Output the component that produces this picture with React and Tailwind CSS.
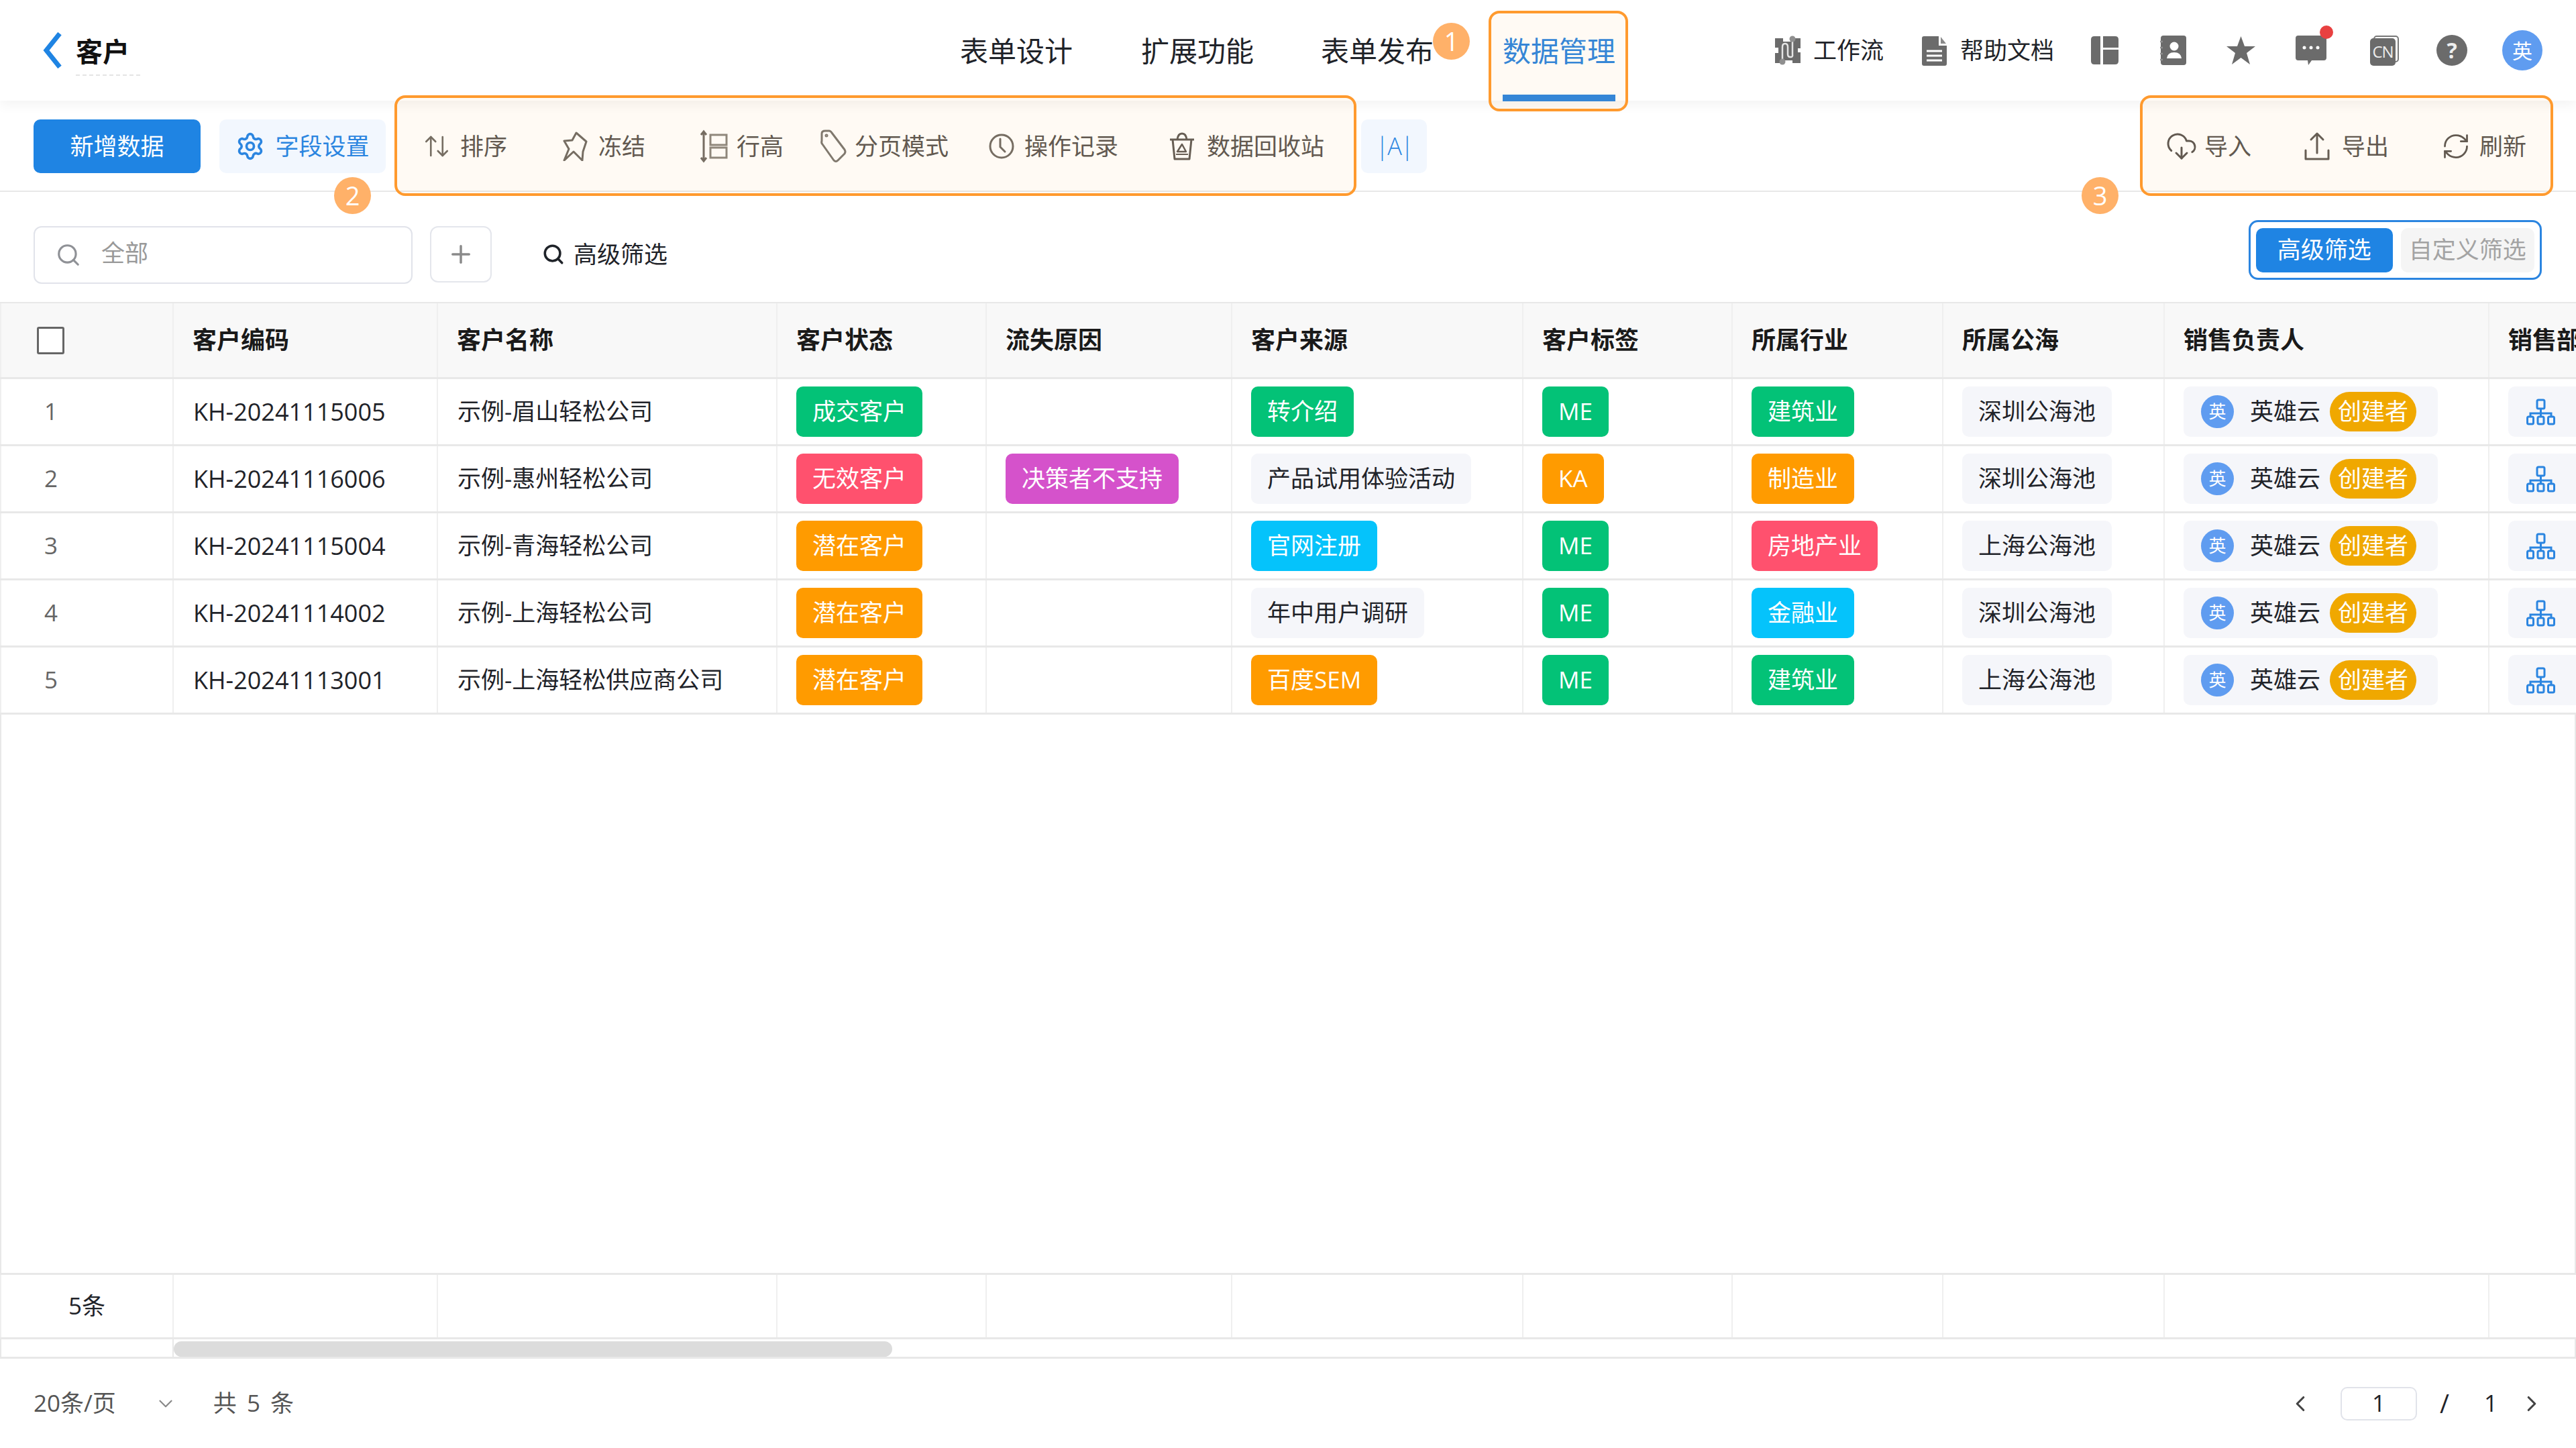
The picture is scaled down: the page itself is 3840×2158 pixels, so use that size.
import { ArrowUpDown, Settings, Search, Plus, ChevronDown, ChevronLeft, ChevronRight, CloudDownload, RefreshCw } from 'lucide-react';

const columns = ['客户编码', '客户名称', '客户状态', '流失原因', '客户来源', '客户标签', '所属行业', '所属公海', '销售负责人', '销售部'];

const GREEN = 'bg-[#03c277] text-white';
const RED = 'bg-[#ff516e] text-white';
const ORANGE = 'bg-[#ff9b00] text-white';
const CYAN = 'bg-[#05c3fb] text-white';
const PURPLE = 'bg-[#d552cb] text-white';
const GRAY = 'bg-[#f5f6fa] text-[#1f2329]';

const rows = [
  { id: 1, code: 'KH-20241115005', name: '示例-眉山轻松公司', status: ['成交客户', GREEN], source: ['转介绍', GREEN], tag: ['ME', GREEN], industry: ['建筑业', GREEN], pool: '深圳公海池' },
  { id: 2, code: 'KH-20241116006', name: '示例-惠州轻松公司', status: ['无效客户', RED], reason: ['决策者不支持', PURPLE], source: ['产品试用体验活动', GRAY], tag: ['KA', ORANGE], industry: ['制造业', ORANGE], pool: '深圳公海池' },
  { id: 3, code: 'KH-20241115004', name: '示例-青海轻松公司', status: ['潜在客户', ORANGE], source: ['官网注册', CYAN], tag: ['ME', GREEN], industry: ['房地产业', RED], pool: '上海公海池' },
  { id: 4, code: 'KH-20241114002', name: '示例-上海轻松公司', status: ['潜在客户', ORANGE], source: ['年中用户调研', GRAY], tag: ['ME', GREEN], industry: ['金融业', CYAN], pool: '深圳公海池' },
  { id: 5, code: 'KH-20241113001', name: '示例-上海轻松供应商公司', status: ['潜在客户', ORANGE], source: ['百度SEM', ORANGE], tag: ['ME', GREEN], industry: ['建筑业', GREEN], pool: '上海公海池' },
];

const GRID = 'grid grid-cols-[259px_394px_506px_312px_366px_434px_312px_314px_330px_484px_129px]';
const CELL = 'flex items-center border-r-2 border-[#efefef] pl-[28px] first:border-l-2 last:border-r-0';

function Chip({ item }) {
  if (!item) return null;
  return <span className={`flex h-[75px] items-center rounded-[10px] px-[24px] text-[35px] whitespace-nowrap ${item[1]}`}>{item[0]}</span>;
}

function Badge({ n, className }) {
  return <div className={`absolute flex h-[55px] w-[55px] items-center justify-center rounded-full bg-[#ffb169] text-[38px] text-white ${className}`}>{n}</div>;
}

function Outline({ className }) {
  return <div className={`absolute rounded-[16px] border-[4px] border-[#ff9a2e] bg-[#ff9a2e]/[0.05] ${className}`} />;
}

function PinIcon() {
  return (
    <svg viewBox="0 0 38 44" className="h-[44px] w-[38px]" fill="none" stroke="#6f6b66" strokeWidth="3" strokeLinejoin="round" strokeLinecap="round">
      <path d="M20 2 35 15 30 30 29 43 16 30 2 43 9 26 2 14 14 13Z" />
    </svg>
  );
}

function RowHeightIcon() {
  return (
    <svg viewBox="0 0 41 50" className="h-[50px] w-[41px]" fill="none" stroke="#8a8680" strokeWidth="3">
      <path d="M5 3v44M1 8l4-5 4 5M1 42l4 5 4-5" stroke="#6f6b66" />
      <rect x="15" y="8" width="24" height="15" />
      <rect x="15" y="27" width="24" height="15" />
    </svg>
  );
}

function TagIcon() {
  return (
    <svg viewBox="0 0 42 50" className="h-[50px] w-[42px]" fill="none" stroke="#7a7671" strokeWidth="3" strokeLinejoin="round">
      <path d="M4 6q0-4 5-4h6q2 0 4 3l19 25q2 3 0 6l-10 10q-3 3-6 0L5 22q-2-2-1-5Z" />
      <circle cx="11" cy="9" r="1" />
    </svg>
  );
}

function ClockIcon() {
  return (
    <svg viewBox="0 0 38 38" className="h-[38px] w-[38px]" fill="none" stroke="#6f6b66" strokeWidth="3" strokeLinecap="round">
      <circle cx="19" cy="19" r="17" />
      <path d="M17 8v12l7 7" />
    </svg>
  );
}

function TrashIcon() {
  return (
    <svg viewBox="0 0 38 42" className="h-[42px] w-[38px]" fill="none" stroke="#5f5b57" strokeWidth="3" strokeLinejoin="round">
      <path d="M1 11h36M5 11l3 29h22l3-29" />
      <path d="M12 11q1-9 7-9t7 9" />
      <path d="M19 18l6 11H12Z" strokeWidth="2.5" />
      <path d="M10 33h18" strokeWidth="2" />
    </svg>
  );
}

function UploadIcon() {
  return (
    <svg viewBox="0 0 38 44" className="h-[44px] w-[38px]" fill="none" stroke="#5f5b57" strokeWidth="3" strokeLinecap="round" strokeLinejoin="round">
      <path d="M19 32V3M10 12l9-9 9 9" />
      <path d="M2 28v13h34V28" />
    </svg>
  );
}

function WorkflowIcon() {
  return (
    <svg viewBox="0 0 38 44" className="h-[44px] w-[38px]">
      <path d="M0 4h12v5h14V4h12v15h-4v6h4v16H26v-4H12v4H0V26h5v-8H0Z" fill="#6b6b6b" />
      <path d="M11 38V17q0-5 4-5t4 5v11q0 4 4 4t3-4V9" fill="none" stroke="#e4e4e4" strokeWidth="2.5" />
      <circle cx="11" cy="39" r="4.5" fill="#8f8f8f" />
      <circle cx="26" cy="5" r="4.5" fill="#8f8f8f" />
    </svg>
  );
}

function DocIcon() {
  return (
    <svg viewBox="0 0 37 45" className="h-[45px] w-[37px]">
      <path d="M3 1h22v14h12v27q0 3-3 3H3q-3 0-3-3V4q0-3 3-3Z" fill="#6b6b6b" />
      <path d="M28 2l8 10h-8Z" fill="#8a8a8a" />
      <path d="M7 23h23M7 30h23M7 37h23" stroke="#fff" strokeWidth="3" />
    </svg>
  );
}

function LayoutIcon() {
  return (
    <svg viewBox="0 0 41 42" className="h-[42px] w-[41px]" fill="#6b6b6b">
      <path d="M5 0h9v42H5q-5 0-5-5V5q0-5 5-5Z" />
      <path d="M18 0h18q5 0 5 5v12H18Z" />
      <path d="M18 20h23v17q0 5-5 5H18Z" />
    </svg>
  );
}

function ContactIcon() {
  return (
    <svg viewBox="0 0 39 44" className="h-[44px] w-[39px]">
      <rect x="1" width="38" height="44" rx="4" fill="#6b6b6b" />
      <path d="M0 9h4M0 18h4M0 27h4M0 36h4" stroke="#8f8f8f" strokeWidth="2.5" />
      <circle cx="21" cy="16" r="6.5" fill="#fff" />
      <path d="M10 34q1-9 11-9t11 9Z" fill="#fff" />
    </svg>
  );
}

function StarIcon() {
  return (
    <svg viewBox="0 0 43 42" className="h-[42px] w-[43px]" fill="#6b6b6b">
      <path d="M21.5 0 27 15h16L30 25l5 17-13.500-10L8 42l5-17L0 15h16Z" />
    </svg>
  );
}

function MessageIcon() {
  return (
    <div className="relative h-[44px] w-[46px]">
      <svg viewBox="0 0 46 44" className="h-[44px] w-[46px]">
        <path d="M4 0h38q4 0 4 4v29q0 4-4 4H24l-5 7-1-7H4q-4 0-4-4V4q0-4 4-4Z" fill="#6b6b6b" />
        <circle cx="13" cy="18" r="2.500" fill="#fff" />
        <circle cx="23" cy="18" r="2.500" fill="#fff" />
        <circle cx="33" cy="18" r="2.500" fill="#fff" />
      </svg>
      <div className="absolute right-[-10px] top-[-15px] h-[20px] w-[20px] rounded-full bg-[#e84040]" />
    </div>
  );
}

function CnIcon() {
  return (
    <div className="relative h-[45px] w-[43px]">
      <div className="absolute right-0 top-0 h-[40px] w-[38px] rounded-[5px] border-2 border-[#777777]" />
      <div className="absolute bottom-0 left-0 flex h-[41px] w-[38px] items-center justify-center rounded-[5px] bg-[#6b6b6b] text-[24px] tracking-[-1px] text-[#ececec]">CN</div>
    </div>
  );
}

function OrgIcon() {
  return (
    <svg viewBox="0 0 43 40" className="h-[40px] w-[43px]" fill="none" stroke="#2b85e0" strokeWidth="3">
      <rect x="16" y="2" width="11" height="13" rx="2" />
      <path d="M21.500 15v7M6 27v-5h31v5M21.500 22v5" />
      <rect x="1.500" y="27" width="9" height="11" rx="2" />
      <rect x="17" y="27" width="9" height="11" rx="2" />
      <rect x="32.500" y="27" width="9" height="11" rx="2" />
    </svg>
  );
}

function Tool({ icon, label, className = '' }) {
  return (
    <div className={`flex items-center text-[35px] text-[#5a5653] ${className}`}>
      {icon}
      <span className="whitespace-nowrap">{label}</span>
    </div>
  );
}

function OwnerChip() {
  return (
    <div className="flex h-[75px] w-[379px] items-center rounded-[10px] bg-[#f5f6fa] pl-[26px] text-[35px] text-[#1f2329]">
      <span className="flex h-[49px] w-[49px] items-center justify-center rounded-full bg-[#5f9cf0] text-[26px] text-white">英</span>
      <span className="ml-[24px] whitespace-nowrap">英雄云</span>
      <span className="ml-[14px] flex h-[59px] w-[129px] items-center justify-center rounded-full bg-[#f0a800] text-white">创建者</span>
    </div>
  );
}

export default function App() {
  return (
    <div className="relative h-[2158px] w-[3840px] overflow-hidden bg-white text-[35px] text-[#1f2329] [font-family:'Open_Sans','Noto_Sans_CJK_SC',sans-serif]">
      {/* top bar */}
      <header className="relative z-10 flex h-[150px] items-center bg-white shadow-[0_6px_18px_rgba(0,0,0,0.05)]">
        <svg viewBox="0 0 28 54" className="ml-[64px] h-[54px] w-[28px]" fill="none" stroke="#1f84e3" strokeWidth="7">
          <path d="M25 2 5 27l20 25" />
        </svg>
        <div className="ml-[21px] mt-[14px] border-b-2 border-dashed border-[#e4e4e4] pb-[8px] pr-[16px] text-[40px] font-bold leading-[52px] text-[#111111]">客户</div>
        <div className="ml-[1222px] flex items-center text-[42px] text-[#1f2329]">
          <span>表单设计</span>
          <span className="ml-[102px]">扩展功能</span>
          <span className="ml-[100px]">表单发布</span>
          <span className="relative ml-[103px] text-[#2b85e0]">
            数据管理
            <span className="absolute left-0 right-0 top-[97px] h-[10px] bg-[#2b85e0]" />
          </span>
        </div>
        <div className="ml-[238px] flex items-center text-[35px] text-[#1f2329]">
          <WorkflowIcon />
          <span className="ml-[19px]">工作流</span>
          <span className="ml-[57px]"><DocIcon /></span>
          <span className="ml-[20px]">帮助文档</span>
          <span className="ml-[55px]"><LayoutIcon /></span>
          <span className="ml-[62px]"><ContactIcon /></span>
          <span className="ml-[60px]"><StarIcon /></span>
          <span className="ml-[60px]"><MessageIcon /></span>
          <span className="ml-[65px]"><CnIcon /></span>
          <span className="ml-[56px] flex h-[46px] w-[46px] items-center justify-center rounded-full bg-[#6b6b6b] text-[32px] font-bold text-[#eeeeee]">?</span>
          <span className="ml-[52px] flex h-[60px] w-[60px] items-center justify-center rounded-full bg-[#5f9cf0] text-[30px] text-white">英</span>
        </div>
      </header>

      {/* toolbar */}
      <div className="flex h-[136px] items-start border-b-2 border-[#e8e8e8] pl-[50px] pt-[28px]">
        <button className="flex h-[80px] w-[249px] items-center justify-center rounded-[10px] bg-[#1f84e3] text-[35px] text-white">新增数据</button>
        <button className="ml-[28px] flex h-[80px] w-[248px] items-center justify-center rounded-[10px] bg-[#f2f7fe] text-[35px] text-[#2b85e0]">
          <Settings className="mr-[15px] h-[44px] w-[44px]" strokeWidth={2} />
          字段设置
        </button>
        <div className="ml-[55px] flex h-[80px] items-center">
          <Tool icon={<ArrowUpDown className="mr-[14px] h-[42px] w-[42px] text-[#6f6b66]" strokeWidth={1.5} />} label="排序" />
          <Tool className="ml-[83px]" icon={<span className="mr-[15px]"><PinIcon /></span>} label="冻结" />
          <Tool className="ml-[82px]" icon={<span className="mr-[13px]"><RowHeightIcon /></span>} label="行高" />
          <Tool className="ml-[53px]" icon={<span className="mr-[11px]"><TagIcon /></span>} label="分页模式" />
          <Tool className="ml-[60px]" icon={<span className="mr-[15px]"><ClockIcon /></span>} label="操作记录" />
          <Tool className="ml-[76px]" icon={<span className="mr-[18px]"><TrashIcon /></span>} label="数据回收站" />
        </div>
        <div className="ml-[55px] flex h-[80px] w-[98px] items-center justify-center rounded-[10px] bg-[#f2f7fe] text-[36px] font-light tracking-[-2px] text-[#2b85e0]">|A|</div>
        <div className="ml-auto flex h-[80px] items-center pr-[74px]">
          <Tool icon={<CloudDownload className="mr-[10px] h-[48px] w-[48px]" strokeWidth={1.5} />} label="导入" />
          <Tool className="ml-[79px]" icon={<span className="mr-[18px]"><UploadIcon /></span>} label="导出" />
          <Tool className="ml-[78px]" icon={<RefreshCw className="mr-[13px] h-[44px] w-[44px]" strokeWidth={1.5} />} label="刷新" />
        </div>
      </div>

      {/* filter row */}
      <div className="flex h-[164px] items-start pl-[50px] pr-[51px] pt-[51px]">
        <div className="flex h-[86px] w-[565px] items-center rounded-[12px] border-2 border-[#e1e3ea] pl-[31px] text-[#999999]">
          <Search className="h-[38px] w-[38px] text-[#8f9196]" strokeWidth={2} />
          <span className="ml-[30px] -translate-y-[3px]">全部</span>
        </div>
        <div className="ml-[26px] flex h-[84px] w-[92px] items-center justify-center rounded-[12px] border-2 border-[#e4e6ec]">
          <Plus className="h-[42px] w-[42px] text-[#8a8a8a]" strokeWidth={2} />
        </div>
        <div className="ml-[75px] flex h-[84px] items-center text-[#1f2329]">
          <Search className="mr-[13px] h-[34px] w-[34px]" strokeWidth={2.5} />
          高级筛选
        </div>
        <div className="ml-auto flex h-[89px] w-[437px] -translate-y-[9px] items-center gap-[12px] rounded-[14px] border-[3px] border-[#2b85e0] px-[8px]">
          <div className="flex h-[66px] w-[204px] items-center justify-center rounded-[10px] bg-[#1f84e3] text-white">高级筛选</div>
          <div className="flex h-[66px] w-[200px] items-center justify-center rounded-[10px] bg-[#f5f5f5] text-[#a3a3a3]">自定义筛选</div>
        </div>
      </div>

      {/* table */}
      <div className="flex h-[1575px] flex-col">
        <div className={`${GRID} h-[115px] border-b-[3px] border-t-2 border-[#e8e8e8] bg-[#f8f8f8]`}>
          <div className={CELL}>
            <span className="ml-[25px] h-[41px] w-[41px] rounded-[3px] border-[3px] border-[#666666] bg-white" />
          </div>
          {columns.map((c) => (
            <div key={c} className={`${CELL} overflow-hidden whitespace-nowrap text-[36px] font-bold text-[#1a1a1a]`}>{c}</div>
          ))}
        </div>

        {rows.map((r) => (
          <div key={r.id} className={`${GRID} h-[100px] border-b-[3px] border-[#e8e8e8]`}>
            <div className={`${CELL} justify-center !pl-0 pr-[107px] text-[#666666]`}>{r.id}</div>
            <div className={`${CELL} text-[36px]`}><span className="ml-[1px]">{r.code}</span></div>
            <div className={CELL}><span className="ml-[1px]">{r.name}</span></div>
            <div className={CELL}><Chip item={r.status} /></div>
            <div className={CELL}><Chip item={r.reason} /></div>
            <div className={CELL}><Chip item={r.source} /></div>
            <div className={CELL}><Chip item={r.tag} /></div>
            <div className={CELL}><Chip item={r.industry} /></div>
            <div className={CELL}><Chip item={[r.pool, GRAY]} /></div>
            <div className={CELL}><OwnerChip /></div>
            <div className={CELL}>
              <div className="flex h-[75px] w-[120px] shrink-0 items-center rounded-[10px] bg-[#f5f6fa] pl-[27px]"><OrgIcon /></div>
            </div>
          </div>
        ))}

        <div className="flex-1 border-x-2 border-[#e8e8e8]" />

        <div className={`${GRID} h-[99px] border-y-[3px] border-[#e8e8e8]`}>
          <div className={`${CELL} justify-center !pl-0 text-[#1f2329]`}>5条</div>
          {columns.map((c) => (
            <div key={c} className={CELL} />
          ))}
        </div>
        <div className="flex h-[29px] border-x-2 border-b-[3px] border-[#e8e8e8]">
          <div className="w-[257px] border-r-2 border-[#e8e8e8]" />
          <div className="mt-[3px] h-[23px] w-[1071px] rounded-full bg-[#dcdcdc]" />
        </div>
      </div>

      {/* pagination */}
      <div className="flex h-[133px] items-center pl-[50px] text-[#555555]">
        <span>20条/页</span>
        <ChevronDown className="ml-[57px] h-[34px] w-[34px] text-[#888888]" strokeWidth={1.5} />
        <span className="ml-[54px] tracking-[3px]">共 5 条</span>
        <ChevronLeft className="ml-auto h-[38px] w-[38px] text-[#444444]" strokeWidth={2} />
        <div className="ml-[41px] flex h-[50px] w-[114px] items-center justify-center rounded-[10px] border-2 border-[#e1e3ea] text-[#1f2329]">1</div>
        <span className="ml-[34px] text-[38px] text-[#1f2329]">/</span>
        <span className="ml-[52px] text-[#1f2329]">1</span>
        <ChevronRight className="ml-[32px] mr-[47px] h-[38px] w-[38px] text-[#444444]" strokeWidth={2} />
      </div>

      {/* numbered annotations drawn over the page */}
      <Outline className="left-[2219px] top-[16px] z-20 h-[150px] w-[208px]" />
      <Outline className="left-[588px] top-[142px] z-20 h-[150px] w-[1434px]" />
      <Outline className="left-[3190px] top-[142px] z-20 h-[150px] w-[616px]" />
      <Badge n="1" className="left-[2136px] top-[34px] z-20" />
      <Badge n="2" className="left-[498px] top-[264px] z-20" />
      <Badge n="3" className="left-[3103px] top-[264px] z-20" />
    </div>
  );
}
